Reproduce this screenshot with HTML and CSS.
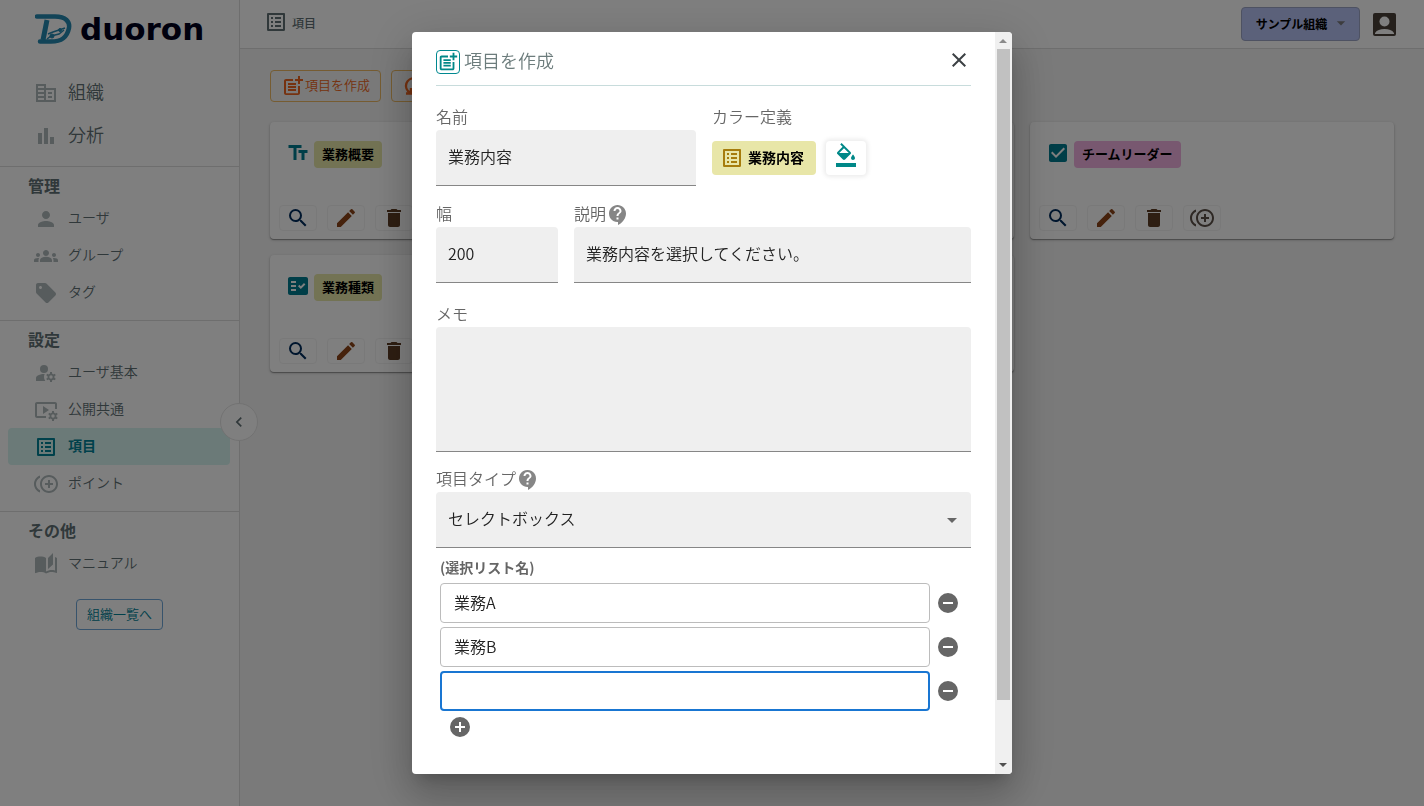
FILE: index.html
```html
<!DOCTYPE html>
<html lang="ja">
<head>
<meta charset="utf-8">
<meta name="viewport" content="width=device-width, initial-scale=1">
<title>duoron - 項目</title>
<link rel="stylesheet" href="styles.css">
</head>
<body>
<svg class="sprite" aria-hidden="true">
  <symbol id="i-business" viewBox="0 0 24 24"><path d="M2 3h10v4h10v14H2V3zm2 2v2h6V5H4zm0 4v2h6V9H4zm0 4v2h6v-2H4zm0 4v2h6v-2H4zm8-8v10h8V9h-8zm2 2h4v2h-4v-2zm0 4h4v2h-4v-2z" fill-rule="evenodd"/></symbol>
  <symbol id="i-chart" viewBox="0 0 24 24"><path d="M4 9h4v11H4zm12 4h4v7h-4zm-6-9h4v16h-4z"/></symbol>
  <symbol id="i-person" viewBox="0 0 24 24"><path d="M12 12c2.21 0 4-1.79 4-4s-1.79-4-4-4-4 1.79-4 4 1.79 4 4 4zm0 2c-2.67 0-8 1.34-8 4v2h16v-2c0-2.66-5.33-4-8-4z"/></symbol>
  <symbol id="i-groups" viewBox="0 0 24 24"><path d="M12 12.75c1.63 0 3.07.39 4.24.9 1.08.48 1.76 1.56 1.76 2.73V18H6v-1.61c0-1.18.68-2.26 1.76-2.73 1.17-.52 2.61-.91 4.24-.91zM4 13c1.1 0 2-.9 2-2s-.9-2-2-2-2 .9-2 2 .9 2 2 2zm1.13 1.1c-.37-.06-.74-.1-1.13-.1-.99 0-1.93.21-2.78.58C.48 14.9 0 15.62 0 16.43V18h4.5v-1.61c0-.83.23-1.61.63-2.29zM20 13c1.1 0 2-.9 2-2s-.9-2-2-2-2 .9-2 2 .9 2 2 2zm4 3.43c0-.81-.48-1.53-1.22-1.85-.85-.37-1.79-.58-2.78-.58-.39 0-.76.04-1.13.1.4.68.63 1.46.63 2.29V18H24v-1.57zM12 6c1.66 0 3 1.34 3 3s-1.34 3-3 3-3-1.34-3-3 1.34-3 3-3z"/></symbol>
  <symbol id="i-tag" viewBox="0 0 24 24"><path d="M21.41 11.58l-9-9C12.05 2.22 11.55 2 11 2H4c-1.1 0-2 .9-2 2v7c0 .55.22 1.05.59 1.42l9 9c.36.36.86.58 1.41.58.55 0 1.05-.22 1.41-.59l7-7c.37-.36.59-.86.59-1.41 0-.55-.23-1.06-.59-1.42zM6.500 8C5.670 8 5 7.330 5 6.500S5.670 5 6.500 5 8 5.670 8 6.500 7.330 8 6.500 8z"/></symbol>
  <symbol id="i-gear" viewBox="0 0 10 10"><circle cx="5" cy="5" r="2.600" fill="none" stroke="currentColor" stroke-width="1.800"/><path d="M5 0v2M5 8v2M.7 2.500l1.700 1M7.600 6.500l1.700 1M.7 7.500l1.700-1M7.600 3.500l1.700-1" fill="none" stroke="currentColor" stroke-width="2"/></symbol>
  <symbol id="i-manage" viewBox="0 0 24 24"><circle cx="10" cy="8" r="4"/><path d="M10.670 13.020C10.450 13.010 10.230 13 10 13c-2.420 0-4.680.670-6.610 1.820C2.510 15.340 2 16.320 2 17.350V20h9.260A6.960 6.960 0 0 1 10 16c0-1.070.250-2.070.670-2.980z"/><use href="#i-gear" x="12" y="11" width="10" height="10"/></symbol>
  <symbol id="i-video" viewBox="0 0 24 24"><path d="M3 6h18v5h2V6c0-1.100-.9-2-2-2H3c-1.100 0-2 .9-2 2v12c0 1.100.9 2 2 2h9v-2H3V6z"/><path d="M15 12 9 8v8z"/><use href="#i-gear" x="14" y="13" width="10" height="10"/></symbol>
  <symbol id="i-list" viewBox="0 0 24 24"><path d="M19 5v14H5V5h14m1.100-2H3.900c-.5 0-.9.4-.9.9v16.200c0 .4.4.9.9.9h16.200c.4 0 .9-.5.9-.9V3.900c0-.5-.5-.9-.9-.9zM11 7h6v2h-6V7zm0 4h6v2h-6v-2zm0 4h6v2h-6zM7 7h2v2H7zm0 4h2v2H7zm0 4h2v2H7z"/></symbol>
  <symbol id="i-point" viewBox="0 0 24 24"><path d="M16 8h-2v3h-3v2h3v3h2v-3h3v-2h-3zM2 12c0-2.790 1.640-5.200 4.010-6.320V3.520C2.520 4.760 0 8.090 0 12s2.520 7.240 6.010 8.480v-2.160C3.640 17.200 2 14.790 2 12zm13-9c-4.960 0-9 4.040-9 9s4.040 9 9 9 9-4.040 9-9-4.040-9-9-9zm0 16c-3.860 0-7-3.140-7-7s3.140-7 7-7 7 3.140 7 7-3.140 7-7 7z"/></symbol>
  <symbol id="i-book" viewBox="0 0 24 24"><path d="M19 1l-5 5v11l5-4.500V1zM1 6v14.650c0 .250.250.500.500.500.100 0 .150-.050.250-.050C3.100 20.450 5.050 20 6.500 20c1.950 0 4.050.400 5.500 1.500V6c-1.450-1.100-3.550-1.500-5.500-1.500S2.450 4.900 1 6zm22 13.500V6c-.6-.450-1.250-.750-2-1v13.500c-1.100-.350-2.300-.5-3.500-.5-1.700 0-4.150.650-5.500 1.500v2c1.350-.850 3.800-1.500 5.500-1.500 1.650 0 3.350.300 4.750 1.050.100.050.150.050.250.050.250 0 .5-.250.5-.5v-1.100z"/></symbol>
  <symbol id="i-add-post" viewBox="0 0 24 24"><path d="M17 19.220H5V7h7V5H5c-1.100 0-2 .9-2 2v12c0 1.100.9 2 2 2h12c1.100 0 2-.9 2-2v-7h-2v7.220z"/><path d="M19 2h-2v3h-3v2h3v3h2V7h3V5h-3V2zM7 9h8v2H7zm0 3h8v2H7zm0 3h8v2H7z"/></symbol>
  <symbol id="i-refresh" viewBox="0 0 24 24"><path d="M9 18.500A7.500 7.500 0 1 1 20 12m-10 2v5.500H5" fill="none" stroke="currentColor" stroke-width="2.400"/></symbol>
  <symbol id="i-text" viewBox="0 0 24 24"><path d="M2.500 4v3h5v12h3V7h5V4h-13zm19 5h-9v3h3v7h3v-7h3V9z"/></symbol>
  <symbol id="i-fact" viewBox="0 0 24 24"><path d="M20 3H4c-1.100 0-2 .9-2 2v14c0 1.100.9 2 2 2h16c1.100 0 2-.9 2-2V5c0-1.100-.9-2-2-2zM10 17H5v-2h5v2zm0-4H5v-2h5v2zm0-4H5V7h5v2zm4.820 6L12 12.160l1.410-1.410 1.410 1.420L17.990 9l1.420 1.420L14.820 15z"/></symbol>
  <symbol id="i-check" viewBox="0 0 24 24"><path d="M19 3H5c-1.110 0-2 .9-2 2v14c0 1.100.890 2 2 2h14c1.110 0 2-.9 2-2V5c0-1.100-.890-2-2-2zm-9 14-5-5 1.410-1.410L10 14.170l7.590-7.590L19 8l-9 9z"/></symbol>
  <symbol id="i-search" viewBox="0 0 24 24"><path d="M15.500 14h-.790l-.280-.270A6.471 6.471 0 0 0 16 9.500 6.500 6.500 0 1 0 9.500 16c1.610 0 3.090-.590 4.230-1.570l.270.280v.790l5 4.990L20.490 19l-4.990-5zm-6 0C7.010 14 5 11.990 5 9.500S7.010 5 9.500 5 14 7.010 14 9.500 11.990 14 9.500 14z"/></symbol>
  <symbol id="i-edit" viewBox="0 0 24 24"><path d="M3 17.250V21h3.750L17.810 9.940l-3.750-3.750L3 17.250zM20.710 7.040c.390-.390.390-1.020 0-1.410l-2.340-2.340a.996.996 0 0 0-1.410 0l-1.830 1.830 3.750 3.750 1.830-1.830z"/></symbol>
  <symbol id="i-delete" viewBox="0 0 24 24"><path d="M6 19c0 1.100.9 2 2 2h8c1.100 0 2-.9 2-2V7H6v12zM19 4h-3.500l-1-1h-5l-1 1H5v2h14V4z"/></symbol>
  <symbol id="i-help" viewBox="0 0 24 24"><path d="M11.500 2C6.810 2 3 5.810 3 10.500S6.810 19 11.500 19h.5v3c4.860-2.340 8-7 8-11.500C20 5.810 16.190 2 11.500 2zm1 14.500h-2v-2h2v2zm0-3.500h-2c0-3.250 3-3 3-5 0-1.100-.9-2-2-2s-2 .9-2 2h-2c0-2.210 1.790-4 4-4s4 1.790 4 4c0 2.500-3 2.750-3 5z"/></symbol>
  <symbol id="i-fill" viewBox="0 0 24 24"><path d="M16.560 8.940 7.620 0 6.210 1.410l2.380 2.380-5.150 5.150c-.590.590-.590 1.540 0 2.120l5.500 5.500c.290.290.680.440 1.060.440s.770-.150 1.060-.440l5.500-5.500c.590-.580.590-1.530 0-2.120zM5.210 10 10 5.210 14.790 10H5.210zM19 11.500s-2 2.170-2 3.500c0 1.100.9 2 2 2s2-.9 2-2c0-1.330-2-3.500-2-3.500zM2 20h20v4H2v-4z"/></symbol>
  <symbol id="i-remove" viewBox="0 0 24 24"><path d="M12 2a10 10 0 1 0 0 20 10 10 0 0 0 0-20zm5 11H7v-2h10v2z"/></symbol>
  <symbol id="i-add" viewBox="0 0 24 24"><path d="M12 2a10 10 0 1 0 0 20 10 10 0 0 0 0-20zm5 11h-4v4h-2v-4H7v-2h4V7h2v4h4v2z"/></symbol>
  <symbol id="i-close" viewBox="0 0 24 24"><path d="M19 6.410 17.590 5 12 10.590 6.410 5 5 6.410 10.590 12 5 17.590 6.410 19 12 13.410 17.590 19 19 17.590 13.410 12z"/></symbol>
  <symbol id="i-left" viewBox="0 0 24 24"><path d="M15.410 7.410 14 6l-6 6 6 6 1.410-1.410L10.830 12z"/></symbol>
  <symbol id="i-down" viewBox="0 0 24 24"><path d="m7 10 5 5 5-5z"/></symbol>
  <symbol id="i-account" viewBox="0 0 24 24"><rect x="1" y="1" width="23" height="23" rx="2"/><path d="M3 22v-1c2-3 5-4 9.500-4s7.500 1 9.500 4v1z" fill="#fff"/><circle cx="12.500" cy="9.500" r="5" fill="#fff"/></symbol>
</svg>

<div class="app">
  <aside class="sidebar">
    <div class="logo">
      <svg class="logo-mark" viewBox="0 0 38 30" fill="none" stroke="#2488b0" aria-hidden="true">
        <path d="M2 2.500H20C31 2.500 35 8 34 14 32 24 26 27.500 16 27.500H5" stroke-width="4.500" stroke-linecap="round"/>
        <path d="M12 6 8 26" stroke-width="5"/>
        <path d="M13 20 18 18 30 14M12 25 16 22 24 20 29 16" stroke-width="1.500"/>
        <circle cx="25" cy="16" r="1.500" fill="#2488b0"/><circle cx="17" cy="22" r="2" fill="#2488b0"/>
      </svg>
      <span class="logo-text">duoron</span>
    </div>
    <nav class="nav">
      <div class="nav-group">
        <a class="nav-item nav-large" href="#"><svg class="icon"><use href="#i-business"/></svg><span>組織</span></a>
        <a class="nav-item nav-large" href="#"><svg class="icon"><use href="#i-chart"/></svg><span>分析</span></a>
      </div>
      <div class="nav-group">
        <h2 class="nav-title">管理</h2>
        <a class="nav-item" href="#"><svg class="icon"><use href="#i-person"/></svg><span>ユーザ</span></a>
        <a class="nav-item" href="#"><svg class="icon"><use href="#i-groups"/></svg><span>グループ</span></a>
        <a class="nav-item" href="#"><svg class="icon"><use href="#i-tag"/></svg><span>タグ</span></a>
      </div>
      <div class="nav-group">
        <h2 class="nav-title">設定</h2>
        <a class="nav-item" href="#"><svg class="icon"><use href="#i-manage"/></svg><span>ユーザ基本</span></a>
        <a class="nav-item" href="#"><svg class="icon"><use href="#i-video"/></svg><span>公開共通</span></a>
        <a class="nav-item is-active" href="#"><svg class="icon"><use href="#i-list"/></svg><span>項目</span></a>
        <a class="nav-item" href="#"><svg class="icon"><use href="#i-point"/></svg><span>ポイント</span></a>
      </div>
      <div class="nav-group">
        <h2 class="nav-title">その他</h2>
        <a class="nav-item" href="#"><svg class="icon"><use href="#i-book"/></svg><span>マニュアル</span></a>
      </div>
    </nav>
    <button class="org-list" type="button">組織一覧へ</button>
    <button class="collapse" type="button" aria-label="メニューを閉じる"><svg class="icon-sm"><use href="#i-left"/></svg></button>
  </aside>

  <div class="content">
    <header class="topbar">
      <h1 class="page-title"><svg class="icon"><use href="#i-list"/></svg>項目</h1>
      <div class="topbar-actions">
        <button class="org-select" type="button">サンプル組織<svg class="icon-sm"><use href="#i-down"/></svg></button>
        <button class="account" type="button" aria-label="アカウント"><svg class="icon"><use href="#i-account"/></svg></button>
      </div>
    </header>
    <main class="main">
      <div class="toolbar">
        <button class="tool" type="button"><svg class="icon"><use href="#i-add-post"/></svg><span>項目を作成</span></button>
        <button class="tool" type="button" aria-label="更新"><svg class="icon"><use href="#i-refresh"/></svg></button>
      </div>
      <div class="cards">
        <article class="card">
          <div class="card-head"><svg class="icon"><use href="#i-text"/></svg><span class="chip">業務概要</span></div>
          <div class="card-actions">
            <button class="act search" type="button" aria-label="検索"><svg class="icon"><use href="#i-search"/></svg></button>
            <button class="act edit" type="button" aria-label="編集"><svg class="icon"><use href="#i-edit"/></svg></button>
            <button class="act delete" type="button" aria-label="削除"><svg class="icon"><use href="#i-delete"/></svg></button>
          </div>
        </article>
        <article class="card"></article>
        <article class="card">
          <div class="card-head"><svg class="icon"><use href="#i-check"/></svg><span class="chip chip-pink">チームリーダー</span></div>
          <div class="card-actions">
            <button class="act search" type="button" aria-label="検索"><svg class="icon"><use href="#i-search"/></svg></button>
            <button class="act edit" type="button" aria-label="編集"><svg class="icon"><use href="#i-edit"/></svg></button>
            <button class="act delete" type="button" aria-label="削除"><svg class="icon"><use href="#i-delete"/></svg></button>
            <button class="act point" type="button" aria-label="ポイント"><svg class="icon"><use href="#i-point"/></svg></button>
          </div>
        </article>
        <article class="card">
          <div class="card-head"><svg class="icon"><use href="#i-fact"/></svg><span class="chip">業務種類</span></div>
          <div class="card-actions">
            <button class="act search" type="button" aria-label="検索"><svg class="icon"><use href="#i-search"/></svg></button>
            <button class="act edit" type="button" aria-label="編集"><svg class="icon"><use href="#i-edit"/></svg></button>
            <button class="act delete" type="button" aria-label="削除"><svg class="icon"><use href="#i-delete"/></svg></button>
          </div>
        </article>
        <article class="card"></article>
      </div>
    </main>
  </div>
</div>

<div class="overlay">
  <section class="dialog" role="dialog" aria-modal="true" aria-labelledby="dialog-title">
    <form class="dialog-body">
      <header class="dialog-head">
        <svg class="icon title-icon"><use href="#i-add-post"/></svg>
        <h2 class="dialog-title" id="dialog-title">項目を作成</h2>
        <button class="close" type="button" aria-label="閉じる"><svg class="icon"><use href="#i-close"/></svg></button>
      </header>

      <div class="row row-name">
        <div class="field">
          <label class="label" for="name">名前</label>
          <input class="input" id="name" type="text" value="業務内容">
        </div>
        <div class="field">
          <span class="label">カラー定義</span>
          <div class="color-row">
            <span class="preview"><svg class="icon"><use href="#i-list"/></svg><span>業務内容</span></span>
            <button class="paint" type="button" aria-label="色を選択"><svg class="icon"><use href="#i-fill"/></svg></button>
          </div>
        </div>
      </div>

      <div class="row row-desc">
        <div class="field">
          <label class="label" for="width">幅</label>
          <input class="input" id="width" type="text" value="200">
        </div>
        <div class="field">
          <label class="label" for="desc">説明<svg class="icon help"><use href="#i-help"/></svg></label>
          <input class="input" id="desc" type="text" value="業務内容を選択してください。">
        </div>
      </div>

      <div class="field field-memo">
        <label class="label" for="memo">メモ</label>
        <textarea class="input memo" id="memo"></textarea>
      </div>

      <div class="field field-type">
        <label class="label" for="type">項目タイプ<svg class="icon help"><use href="#i-help"/></svg></label>
        <div class="select-wrap">
          <select class="input" id="type"><option>セレクトボックス</option></select>
          <svg class="icon select-arrow"><use href="#i-down"/></svg>
        </div>
      </div>

      <fieldset class="options">
        <legend class="options-title">(選択リスト名)</legend>
        <div class="option">
          <input class="option-input" type="text" value="業務A" aria-label="選択肢1">
          <button class="round" type="button" aria-label="選択肢1を削除"><svg class="icon"><use href="#i-remove"/></svg></button>
        </div>
        <div class="option">
          <input class="option-input" type="text" value="業務B" aria-label="選択肢2">
          <button class="round" type="button" aria-label="選択肢2を削除"><svg class="icon"><use href="#i-remove"/></svg></button>
        </div>
        <div class="option">
          <input class="option-input is-focused" type="text" value="" aria-label="選択肢3">
          <button class="round" type="button" aria-label="選択肢3を削除"><svg class="icon"><use href="#i-remove"/></svg></button>
        </div>
        <button class="round add" type="button" aria-label="選択肢を追加"><svg class="icon"><use href="#i-add"/></svg></button>
      </fieldset>
    </form>
    <div class="scrollbar" aria-hidden="true">
      <svg class="scroll-arrow" viewBox="0 0 17 17"><path d="M4 11h8L8 7z" fill="#8a8a8a"/></svg>
      <div class="scroll-track"><div class="scroll-thumb"></div></div>
      <svg class="scroll-arrow" viewBox="0 0 17 17"><path d="M4 6h8l-4 4z" fill="#505050"/></svg>
    </div>
  </section>
</div>
</body>
</html>
```
FILE: styles.css
```css
*, *::before, *::after { box-sizing: border-box; }

body {
  margin: 0;
  overflow: hidden;
  font-family: "Noto Sans CJK JP", sans-serif;
  font-size: 16px;
  font-weight: 350;
  color: #607074;
  background: #f4f4f4;
}

h1, h2 { margin: 0; }

button, input, select, textarea {
  margin: 0;
  font-family: inherit;
  font-weight: inherit;
}

button {
  display: flex;
  align-items: center;
  justify-content: center;
  padding: 0;
  border: 0;
  background: none;
  color: inherit;
}

.sprite { position: absolute; width: 0; height: 0; }

.icon { display: block; flex: none; width: 24px; height: 24px; fill: currentColor; }
.icon-sm { display: block; flex: none; width: 20px; height: 20px; fill: currentColor; }

.app { display: flex; min-height: 100vh; }

/* Sidebar */
.sidebar {
  position: relative;
  flex: none;
  width: 240px;
  border-right: 1px solid #dcdcdc;
  background: #fff;
}

.logo {
  display: flex;
  align-items: center;
  gap: 7px;
  height: 71px;
  padding: 0 0 13px 35px;
  color: #00001c;
}
.logo-mark { width: 38px; height: 30px; }
.logo-text { font: bold 31px/40px "DejaVu Sans", sans-serif; }

.nav-group { padding-bottom: 9px; border-bottom: 1px solid #dcdcdc; }
.nav-group:last-child { padding-bottom: 0; border-bottom: 0; }

.nav-title {
  height: 33px;
  padding: 6px 28px;
  font-size: 16px;
  line-height: 24px;
  font-weight: 700;
}

.nav-item {
  display: flex;
  align-items: center;
  gap: 10px;
  height: 37px;
  margin: 0 9px 0 8px;
  padding-left: 26px;
  border-radius: 4px;
  font-size: 14px;
  line-height: 20px;
  color: #607074;
  text-decoration: none;
}
.nav-item span { padding-bottom: 4px; }
.nav-item .icon { color: #aeb8ba; }
.nav-large { height: 43px; font-size: 18px; }
.nav-item.is-active { background: #d6f4f1; color: #008296; font-weight: 700; }
.nav-item.is-active .icon { color: #008296; }

.org-list {
  width: 87px;
  height: 31px;
  margin: 17px auto 0;
  padding-bottom: 3px;
  border: 1px solid #6fa6d8;
  border-radius: 4px;
  font-size: 13px;
  color: #008296;
}

.collapse {
  position: absolute;
  top: 403px;
  right: -19px;
  width: 38px;
  height: 38px;
  border: 1px solid #e4e4e4;
  border-radius: 50%;
  background: #fff;
}

/* Page */
.content { flex: 1; min-width: 0; }

.topbar {
  display: flex;
  align-items: center;
  justify-content: space-between;
  height: 49px;
  padding: 0 24px;
  border-bottom: 1px solid #dcdcdc;
  background: #fff;
}
.page-title {
  display: flex;
  align-items: center;
  gap: 4px;
  padding-bottom: 4px;
  font-size: 12px;
  font-weight: 500;
}
.topbar-actions { display: flex; align-items: center; gap: 12px; padding-right: 4px; }
.org-select {
  gap: 4px;
  width: 119px;
  height: 34px;
  padding: 0 0 2px 6px;
  border: 1px solid #9ca4c4;
  border-radius: 4px;
  background: #b6c2f4;
  font-size: 12px;
  font-weight: 700;
  color: #000;
}
.org-select .icon-sm { color: #78787c; }
.account { color: #4a4038; }

.main { padding: 21px 30px; }
.toolbar { display: flex; gap: 10px; }
.tool {
  width: 111px;
  height: 32px;
  border: 1px solid #ecb964;
  border-radius: 4px;
  font-size: 13px;
  color: #ec6420;
}
.tool span { padding-bottom: 4px; }
.tool + .tool { width: 44px; }

.cards {
  display: grid;
  grid-template-columns: repeat(3, 1fr);
  gap: 16px;
  margin-top: 20px;
}
.card {
  display: flex;
  flex-direction: column;
  justify-content: space-between;
  min-height: 117px;
  padding: 19px 9px 8px;
  border-radius: 4px;
  background: #fff;
  box-shadow: 0 1px 3px rgba(0, 0, 0, .2), 0 1px 1px rgba(0, 0, 0, .3);
}
.card-head { display: flex; align-items: flex-start; gap: 4px; padding-left: 7px; color: #007c90; }
.chip {
  padding: 0 8px 2px;
  border-radius: 4px;
  background: #e6e6a8;
  font-size: 13px;
  line-height: 25px;
  font-weight: 700;
  color: #000;
}
.chip-pink { background: #f0b0e0; }
.card-actions { display: flex; gap: 10px; }
.act { width: 38px; height: 26px; border: 1px solid #f2f2f2; border-radius: 4px; }
.search { color: #002c5c; }
.edit { color: #8c4418; }
.delete { color: #5c3c24; }
.point { color: #5c5048; }

/* Dialog */
.overlay {
  position: fixed;
  inset: 0;
  display: flex;
  justify-content: center;
  padding: 32px;
  background: rgba(0, 0, 0, .5);
}
.dialog {
  display: flex;
  width: 600px;
  border-radius: 4px;
  overflow: hidden;
  background: #fff;
  box-shadow: 0 11px 15px -7px rgba(0, 0, 0, .2), 0 24px 38px 3px rgba(0, 0, 0, .14), 0 9px 46px 8px rgba(0, 0, 0, .12);
}
.dialog-body { flex: 1; min-width: 0; padding: 16px 24px; }

.dialog-head {
  display: flex;
  align-items: flex-start;
  gap: 4px;
  height: 38px;
  border-bottom: 1px solid #c8dcdc;
}
.title-icon { margin-top: 2px; border: 1px solid #008890; border-radius: 4px; color: #008888; }
.dialog-title { flex: 1; font-size: 18px; line-height: 24px; font-weight: 350; color: #6c7c7c; }
.close { color: #3c4044; }

.row { display: grid; gap: 16px; }
.row-name { grid-template-columns: 260px 1fr; margin-top: 20px; }
.row-desc { grid-template-columns: 122px 1fr; margin-top: 17px; }
.field-memo { margin-top: 20px; }
.field-type { margin-top: 16px; }

.label {
  display: flex;
  align-items: flex-start;
  height: 24px;
  font-size: 16px;
  line-height: 20px;
  color: #666;
}
.help { color: #868686; }

.input {
  display: block;
  width: 100%;
  height: 56px;
  padding: 0 12px 4px;
  border: 0;
  border-bottom: 1px solid #868686;
  border-radius: 4px 4px 0 0;
  background: #efefef;
  font-size: 16px;
  color: #222;
  appearance: none;
  outline: 0;
}
.memo { height: 125px; padding: 12px; resize: none; }

.color-row { display: flex; align-items: center; gap: 10px; padding-top: 11px; }
.preview {
  display: flex;
  align-items: center;
  gap: 4px;
  height: 34px;
  padding: 0 12px 0 8px;
  border-radius: 4px;
  background: #e8e6a8;
  font-size: 14px;
  line-height: 20px;
  font-weight: 700;
  color: #000;
}
.preview span { padding-bottom: 3px; }
.preview .icon { color: #a67c0c; }
.paint {
  width: 40px;
  height: 34px;
  padding-bottom: 6px;
  border-radius: 4px;
  color: #008888;
  box-shadow: 0 0 4px 2px #ececec;
}

.select-wrap { display: grid; align-items: center; }
.select-wrap > * { grid-area: 1 / 1; }
.select-arrow { justify-self: end; margin-right: 7px; color: #666; pointer-events: none; }

.options { margin: 10px 0 0; padding: 0 11px 0 4px; border: 0; min-width: 0; }
.options-title { padding: 0 0 7px; font-size: 14px; line-height: 18px; font-weight: 700; color: #666; }
.option { display: flex; align-items: center; gap: 6px; margin-bottom: 4px; }
.option-input {
  flex: 1;
  min-width: 0;
  height: 40px;
  padding: 0 13px 2px;
  border: 1px solid #bcbcbc;
  border-radius: 4px;
  background: #fff;
  font-size: 16px;
  color: #222;
  outline: 0;
}
.option-input.is-focused { border: 2px solid #1976d2; }
.round { color: #666; }
.add { margin-left: 8px; }

.scrollbar { display: flex; flex: none; flex-direction: column; width: 17px; background: #f0f0f0; }
.scroll-arrow { flex: none; width: 17px; height: 17px; }
.scroll-track { flex: 1; padding: 0 2px; }
.scroll-thumb { height: 92%; background: #c1c1c1; }
```
